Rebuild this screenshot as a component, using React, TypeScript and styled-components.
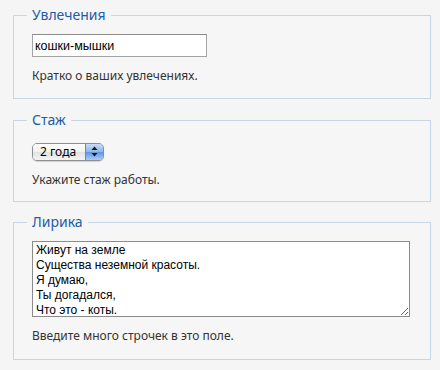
import styled, { createGlobalStyle } from 'styled-components';

const GlobalStyle = createGlobalStyle`
	html, body {
		margin: 0;
		padding: 0;
		background: #f5f5f5;
	}
	body {
		font-family: 'Noto Sans', 'DejaVu Sans', sans-serif;
		color: #333;
	}
`;

const Page = styled.form`
	padding: 6px 9px 0 13px;
	display: flex;
	flex-direction: column;
	gap: 11px;
`;

const Fieldset = styled.fieldset<{ $bottom?: number; $shift?: number }>`
	margin: ${props => props.$shift ?? 0}px 0 0;
	width: 418px;
	box-sizing: border-box;
	border: 1px solid #c6d6e6;
	background: #f6f6f6;
	padding: 10px 18px ${props => props.$bottom ?? 14}px;
	min-width: 0;
`;

const Legend = styled.legend`
	margin-left: -5px;
	padding: 0 5px;
	font-size: 14px;
	line-height: 18px;
	color: #1d5ca8;
`;

const TextInput = styled.input`
	display: block;
	box-sizing: border-box;
	width: 175px;
	height: 23px;
	margin: 0;
	padding: 1px 2px 0;
	border: 1px solid #a3a3a3;
	border-top-color: #8c8c8c;
	background: #fff;
	font-family: 'Liberation Sans', Arial, sans-serif;
	font-size: 12.5px;
	color: #000;
	outline: none;
`;

const SelectBox = styled.div`
	display: inline-flex;
	align-items: stretch;
	box-sizing: border-box;
	width: 72px;
	height: 18px;
	border: 1px solid #8e8e8e;
	border-radius: 5px;
	overflow: hidden;
	box-shadow: 0 1px 1px rgba(0, 0, 0, 0.15);
`;

const SelectValue = styled.span`
	flex: 1;
	display: flex;
	align-items: center;
	padding-left: 7px;
	font-size: 12px;
	color: #000;
	background: linear-gradient(#ffffff, #f0f0f0 50%, #e2e2e2 51%, #f4f4f4);
`;

const Stepper = styled.span`
	width: 17px;
	display: flex;
	align-items: center;
	justify-content: center;
	border-left: 1px solid #6e86b8;
	background: linear-gradient(#c8dcf6, #8db6ec 50%, #5e96e0 51%, #a8cdf6);
`;

const Help = styled.p<{ $top?: number }>`
	margin: ${props => props.$top ?? 12}px 0 0;
	font-size: 12px;
	line-height: 14px;
	color: #333;
`;

const Lyrics = styled.textarea`
	display: block;
	box-sizing: border-box;
	width: 378px;
	height: 76px;
	margin: 0;
	padding: 1px 3px;
	border: 1px solid #8c8c8c;
	background: #fff;
	font-family: 'Liberation Sans', Arial, sans-serif;
	font-size: 12px;
	line-height: 15px;
	color: #000;
	outline: none;
	overflow: hidden;
`;

const lyrics = [
	'Живут на земле',
	'Существа неземной красоты.',
	'Я думаю,',
	'Ты догадался,',
	'Что это - коты.',
].join('\n');

const App = () => {
	return (
		<>
			<GlobalStyle />
			<Page>
				<Fieldset $bottom={15}>
					<Legend>Увлечения</Legend>
					<TextInput defaultValue='кошки-мышки' />
					<Help>Кратко о ваших увлечениях.</Help>
				</Fieldset>

				<Fieldset $bottom={14} $shift={1}>
					<Legend>Стаж</Legend>
					<SelectBox>
						<SelectValue>2 года</SelectValue>
						<Stepper>
							<svg width='7' height='11' viewBox='0 0 7 11'>
								<path d='M3.5 0.5 L6.5 4 L0.5 4 Z' fill='#1a1a1a' />
								<path d='M3.5 10.5 L6.5 7 L0.5 7 Z' fill='#1a1a1a' />
							</svg>
						</Stepper>
					</SelectBox>
					<Help $top={12}>Укажите стаж работы.</Help>
				</Fieldset>

				<Fieldset $bottom={16}>
					<Legend>Лирика</Legend>
					<Lyrics defaultValue={lyrics} />
					<Help>Введите много строчек в это поле.</Help>
				</Fieldset>
			</Page>
		</>
	);
};

export default App;
